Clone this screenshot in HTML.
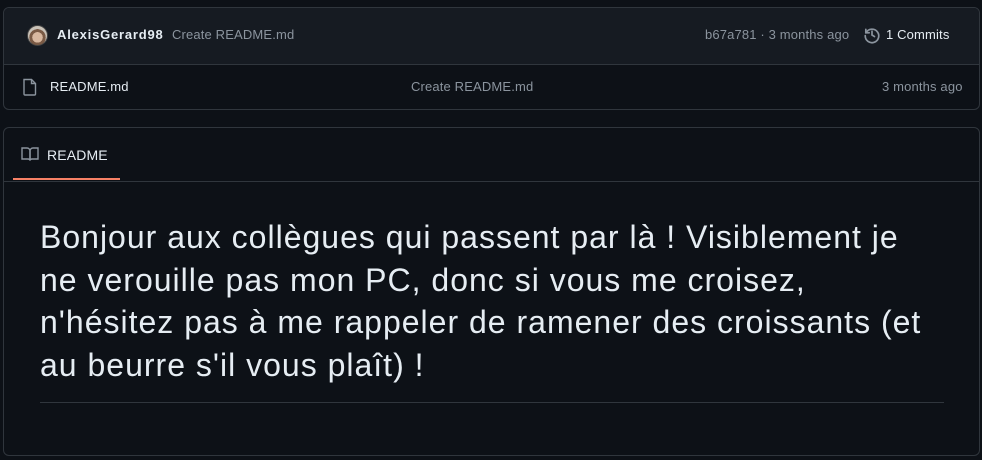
<!DOCTYPE html>
<html><head><meta charset="utf-8"><style>
*{box-sizing:border-box;margin:0;padding:0}
body{width:982px;height:460px;background:#0d1117;font-family:"Liberation Sans",Arial,sans-serif;color:#e6edf3;position:relative;overflow:hidden}
.abs{position:absolute;white-space:nowrap}
.box1{position:absolute;left:3px;top:7px;width:977px;height:103px;border:1px solid #30363d;border-radius:6px;overflow:hidden}
.hdr{position:absolute;left:0;top:0;width:100%;height:57px;background:#161b22;border-bottom:1px solid #30363d}
.box2{position:absolute;left:3px;top:127px;width:977px;height:329px;border:1px solid #30363d;border-radius:6px}
.t13{font-size:13px;line-height:16px;letter-spacing:0.15px}
.md{position:absolute;left:40px;top:216px;font-size:32px;line-height:42.5px;letter-spacing:1px;color:#e6edf3;white-space:nowrap}
</style></head><body>
<div class="box1">
 <div class="hdr"></div>
</div>
<div class="abs" style="left:27px;top:25px;width:21px;height:21px;border-radius:50%;background:radial-gradient(circle at 50% 60%,#d8b8a0 0 35%,#7a5a45 36% 55%,#c9c2b8 56%);border:1px solid #444"></div>
<div class="abs t13" style="left:57px;top:27px;font-weight:bold;color:#e6edf3;letter-spacing:0.8px">AlexisGerard98</div>
<div class="abs t13" style="left:172px;top:27px;color:#8b949e">Create README.md</div>
<div class="abs t13" style="left:705px;top:27px;color:#8b949e">b67a781 · 3 months ago</div>
<svg class="abs" style="left:863px;top:26px" width="18" height="18" viewBox="0 0 16 16" fill="none" stroke="#8b949e" stroke-width="1.5" stroke-linecap="round"><path d="M2.5 3v3h3"/><path d="M2.7 6A6 6 0 1 1 2 8.5"/><path d="M8 4.5V8l2.2 1.4"/></svg>
<div class="abs t13" style="left:886px;top:27px;color:#e6edf3">1 Commits</div>
<svg class="abs" style="left:22px;top:78px" width="16" height="18" viewBox="0 0 16 18" fill="none" stroke="#8b949e" stroke-width="1.4"><path d="M2 1.5h7.5l4 4v10.5a1 1 0 0 1-1 1H3a1 1 0 0 1-1-1z"/><path d="M9.5 1.5v4h4"/></svg>
<div class="abs t13" style="left:50px;top:79px;color:#e6edf3">README.md</div>
<div class="abs t13" style="left:411px;top:79px;color:#8b949e">Create README.md</div>
<div class="abs t13" style="left:882px;top:79px;color:#8b949e">3 months ago</div>

<div class="box2"></div>
<svg class="abs" style="left:21px;top:146px" width="18" height="16" viewBox="0 0 18 16" fill="none" stroke="#8b949e" stroke-width="1.4"><path d="M1 2h5a3 3 0 0 1 3 3v9.5a2 2 0 0 0-2-1.5H1z"/><path d="M17 2h-5a3 3 0 0 0-3 3v9.5a2 2 0 0 1 2-1.5h6z"/></svg>
<div class="abs t13" style="left:47px;top:147px;font-size:14px;color:#e6edf3">README</div>
<div class="abs" style="left:13px;top:178px;width:107px;height:2px;background:#f78166"></div>
<div class="abs" style="left:4px;top:181px;width:975px;height:1px;background:#30363d"></div>
<div class="md">Bonjour aux collègues qui passent par là ! Visiblement je<br>ne verouille pas mon PC, donc si vous me croisez,<br>n'hésitez pas à me rappeler de ramener des croissants (et<br>au beurre s'il vous plaît) !</div>
<div class="abs" style="left:40px;top:402px;width:904px;height:1px;background:#30363d"></div>
</body></html>
